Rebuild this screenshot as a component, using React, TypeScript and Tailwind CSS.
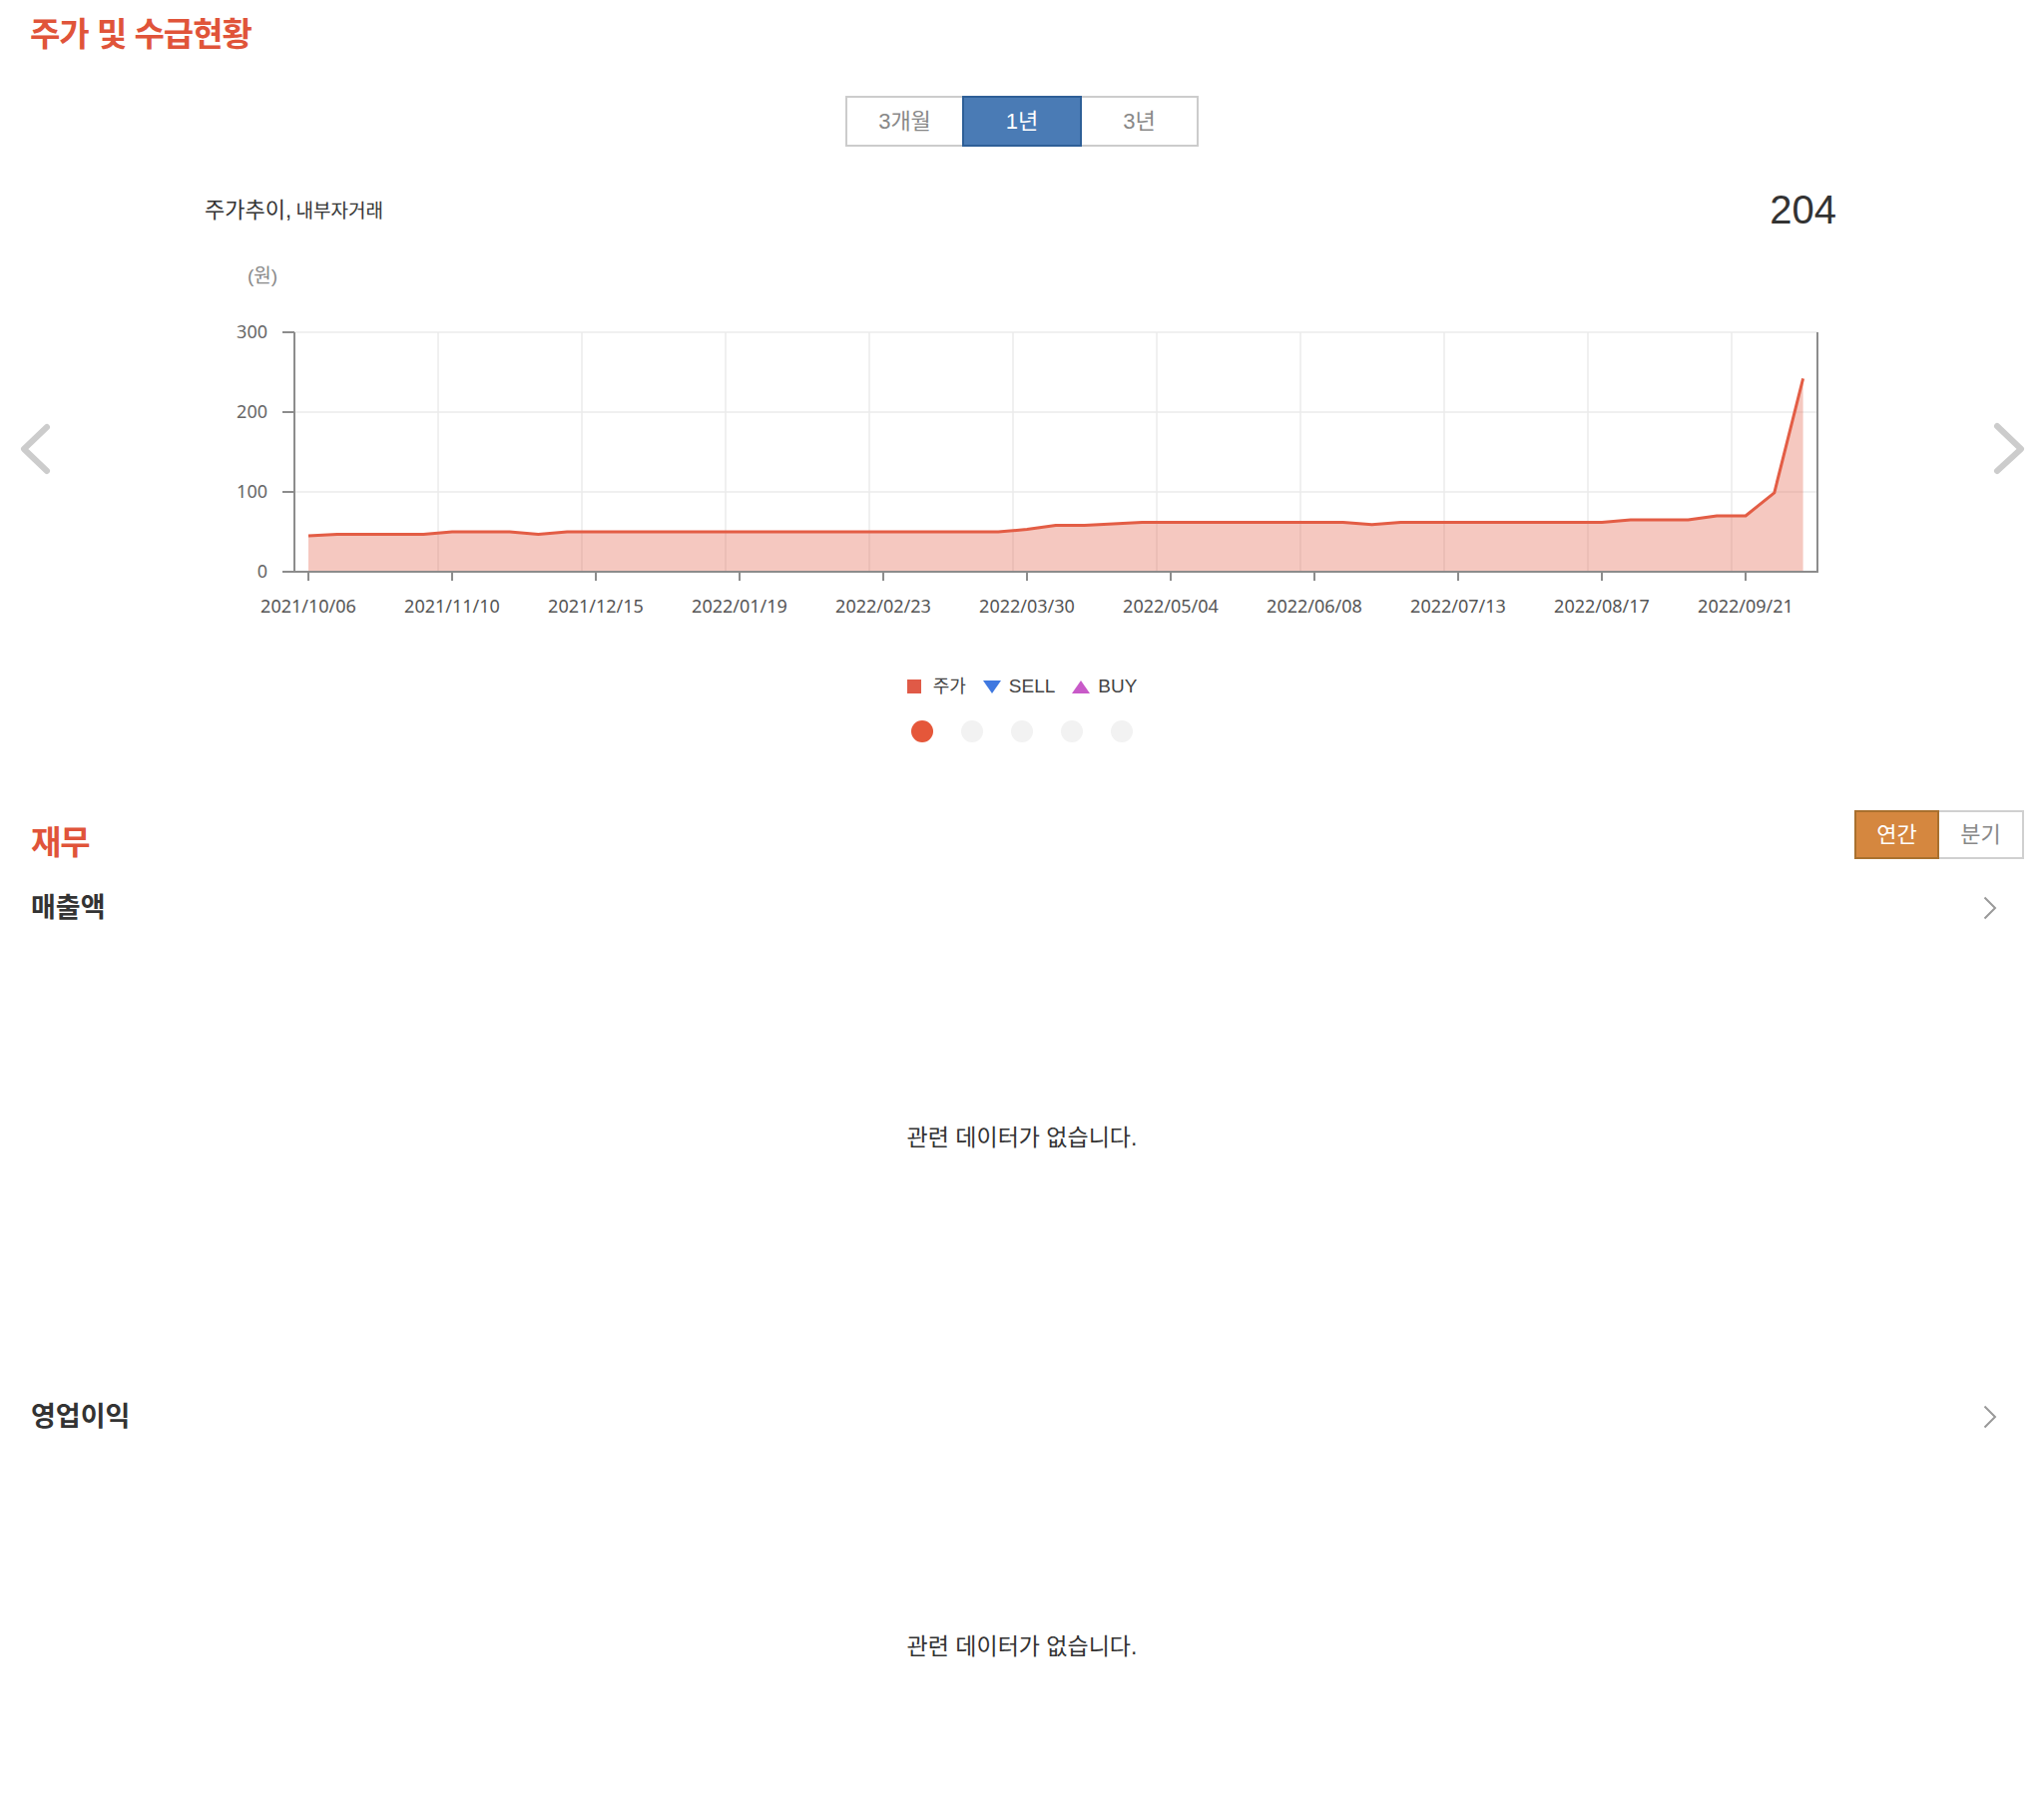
import React from 'react';

// weekly close, 2021/10/06 .. 2022/10/05
const PRICES: number[] = [
  45, 47, 47, 47, 47, 50, 50, 50, 47, 50,
  50, 50, 50, 50, 50, 50, 50, 50, 50, 50, 50, 50, 50, 50, 50,
  53, 58, 58, 60, 62,
  62, 62, 62, 62, 62, 62, 62, 59,
  62, 62, 62, 62, 62, 62, 62, 62,
  65, 65, 65, 70, 70, 99, 242,
];

const X_LABELS = [
  '2021/10/06', '2021/11/10', '2021/12/15', '2022/01/19', '2022/02/23', '2022/03/30',
  '2022/05/04', '2022/06/08', '2022/07/13', '2022/08/17', '2022/09/21',
];

const PLOT = { left: 295, right: 1821, top: 33, bottom: 273 };
const xAt = (i: number) => 309 + i * 28.8;
const yAt = (v: number) => PLOT.bottom - v * 0.8;

function PriceChart() {
  const line = PRICES.map((v, i) => `${i ? 'L' : 'M'}${xAt(i).toFixed(1)},${yAt(v).toFixed(1)}`).join(' ');
  const area = `${line} L${xAt(PRICES.length - 1).toFixed(1)},${PLOT.bottom} L${xAt(0)},${PLOT.bottom} Z`;

  return (
    <svg width={2048} height={330} viewBox="0 0 2048 330" className="mt-[2px] block font-['Noto_Sans',sans-serif]">
      {[0, 1, 2].map((k) => (
        <line key={`h${k}`} x1={PLOT.left} x2={PLOT.right} y1={33 + 80 * k} y2={33 + 80 * k} stroke="#ebebeb" strokeWidth={1.5} />
      ))}
      {Array.from({ length: 10 }, (_, k) => (
        <line key={`v${k}`} x1={439 + 144 * k} x2={439 + 144 * k} y1={PLOT.top} y2={PLOT.bottom} stroke="#ebebeb" strokeWidth={1.5} />
      ))}
      <path d={area} fill="#e35d45" fillOpacity={0.34} />
      <path d={line} fill="none" stroke="#e35d45" strokeWidth={3} strokeLinejoin="round" />

      <line x1={PLOT.left} x2={PLOT.left} y1={PLOT.top} y2={PLOT.bottom + 1} stroke="#8c8c8c" strokeWidth={2} />
      <line x1={PLOT.right} x2={PLOT.right} y1={PLOT.top} y2={PLOT.bottom + 1} stroke="#8c8c8c" strokeWidth={2} />
      <line x1={PLOT.left} x2={PLOT.right + 1} y1={PLOT.bottom} y2={PLOT.bottom} stroke="#8c8c8c" strokeWidth={2} />

      {['300', '200', '100', '0'].map((t, k) => (
        <g key={t}>
          <line x1={283} x2={PLOT.left} y1={33 + 80 * k} y2={33 + 80 * k} stroke="#8c8c8c" strokeWidth={2} />
          <text x={268} y={33 + 80 * k + 6} textAnchor="end" fontSize={18} fill="#666">
            {t}
          </text>
        </g>
      ))}
      {X_LABELS.map((t, k) => (
        <g key={t}>
          <line x1={309 + 144 * k} x2={309 + 144 * k} y1={PLOT.bottom} y2={PLOT.bottom + 9} stroke="#8c8c8c" strokeWidth={2} />
          <text x={309 + 144 * k} y={314} textAnchor="middle" fontSize={18} fill="#555">
            {t}
          </text>
        </g>
      ))}
    </svg>
  );
}

function FinBlock({ title, last }: { title: string; last?: boolean }) {
  return (
    <div>
      <div className="flex h-[50px] items-center justify-between pl-[31px] pr-[47px]">
        <h3 className="text-[27px] font-bold text-[#333]">{title}</h3>
        <svg width={14} height={24} viewBox="0 0 14 24" aria-hidden>
          <path d="M1.5 1.5 L12 12 L1.5 22.5" fill="none" stroke="#999" strokeWidth={2} />
        </svg>
      </div>
      <div className={last ? 'pt-[190px] pb-[151px]' : 'pt-[190px] pb-[240px]'}>
        <p className="flex h-[30px] items-center justify-center text-[23px] text-[#333]">관련 데이터가 없습니다.</p>
      </div>
    </div>
  );
}

export default function App() {
  return (
    <div className="w-[2048px] min-h-[1816px] bg-white text-[#333] font-['Liberation_Sans','Noto_Sans_CJK_KR',sans-serif]">
      <section className="relative">
        <div className="flex h-[70px] items-center pl-[30px]">
          <h2 className="text-[33px] font-bold tracking-[-1px] text-[#e0543a]">주가 및 수급현황</h2>
        </div>

        <div className="mt-[26px] flex justify-center">
          <button type="button" className="h-[51px] w-[117px] border-2 border-r-0 border-[#cccccc] bg-white text-[22px] text-[#888]">
            3개월
          </button>
          <button type="button" className="h-[51px] w-[120px] border-2 border-[#2e5f97] bg-[#4a7bb5] text-[22px] text-white">
            1년
          </button>
          <button type="button" className="h-[51px] w-[117px] border-2 border-l-0 border-[#cccccc] bg-white text-[22px] text-[#888]">
            3년
          </button>
        </div>

        <div className="mt-[33px] flex h-[60px] items-center justify-between pl-[205px] pr-[208px]">
          <p>
            <span className="text-[22px] text-[#333]">주가추이,</span>{' '}
            <span className="text-[19px] text-[#333]">내부자거래</span>
          </p>
          <span className="text-[40px] text-[#333]">204</span>
        </div>

        <div className="mt-[19px] flex h-[36px] items-center pl-[248px] text-[19px] text-[#888]">(원)</div>

        <div className="pt-[3px]">
          <PriceChart />
        </div>

        <div className="mt-[43px] flex h-[30px] items-center justify-center">
          <span className="h-[14px] w-[14px] bg-[#e05a47]" />
          <span className="ml-[12px] text-[18px] text-[#444]">주가</span>
          <svg className="ml-[17px]" width={18} height={13} viewBox="0 0 18 13" aria-hidden>
            <polygon points="0,0 18,0 9,13" fill="#3f78e0" />
          </svg>
          <span className="ml-[8px] text-[19px] text-[#444]">SELL</span>
          <svg className="ml-[17px]" width={18} height={13} viewBox="0 0 18 13" aria-hidden>
            <polygon points="9,0 18,13 0,13" fill="#c85ac8" />
          </svg>
          <span className="ml-[8px] text-[19px] text-[#444]">BUY</span>
        </div>

        <div className="mt-[19px] flex justify-center gap-[28px]">
          <span className="h-[22px] w-[22px] rounded-full bg-[#e5573a]" />
          <span className="h-[22px] w-[22px] rounded-full bg-[#f2f2f2]" />
          <span className="h-[22px] w-[22px] rounded-full bg-[#f2f2f2]" />
          <span className="h-[22px] w-[22px] rounded-full bg-[#f2f2f2]" />
          <span className="h-[22px] w-[22px] rounded-full bg-[#f2f2f2]" />
        </div>

        <svg className="absolute left-[18px] top-[422px]" width={36} height={56} viewBox="0 0 36 56" aria-hidden>
          <path d="M29 6 L6 28 L29 50" fill="none" stroke="#cccccc" strokeWidth={6} strokeLinecap="round" strokeLinejoin="round" />
        </svg>
        <svg className="absolute left-[1994px] top-[422px]" width={36} height={56} viewBox="0 0 36 56" aria-hidden>
          <path d="M7 5 L31 28 L7 50" fill="none" stroke="#cccccc" strokeWidth={6} strokeLinecap="round" strokeLinejoin="round" />
        </svg>
      </section>

      <section>
        <div className="mt-[68px] flex h-[49px] justify-between pl-[31px] pr-[20px]">
          <h2 className="self-end text-[33px] font-bold leading-none tracking-[-1px] text-[#e0543a]">재무</h2>
          <div className="flex">
            <button type="button" className="h-[49px] w-[85px] border-2 border-[#a9702e] bg-[#d5873f] text-[22px] text-white">
              연간
            </button>
            <button type="button" className="h-[49px] w-[85px] border-2 border-l-0 border-[#d0d0d0] bg-white text-[22px] text-[#888]">
              분기
            </button>
          </div>
        </div>

        <div className="mt-[24px]">
          <FinBlock title="매출액" />
          <FinBlock title="영업이익" last />
        </div>
      </section>
    </div>
  );
}
